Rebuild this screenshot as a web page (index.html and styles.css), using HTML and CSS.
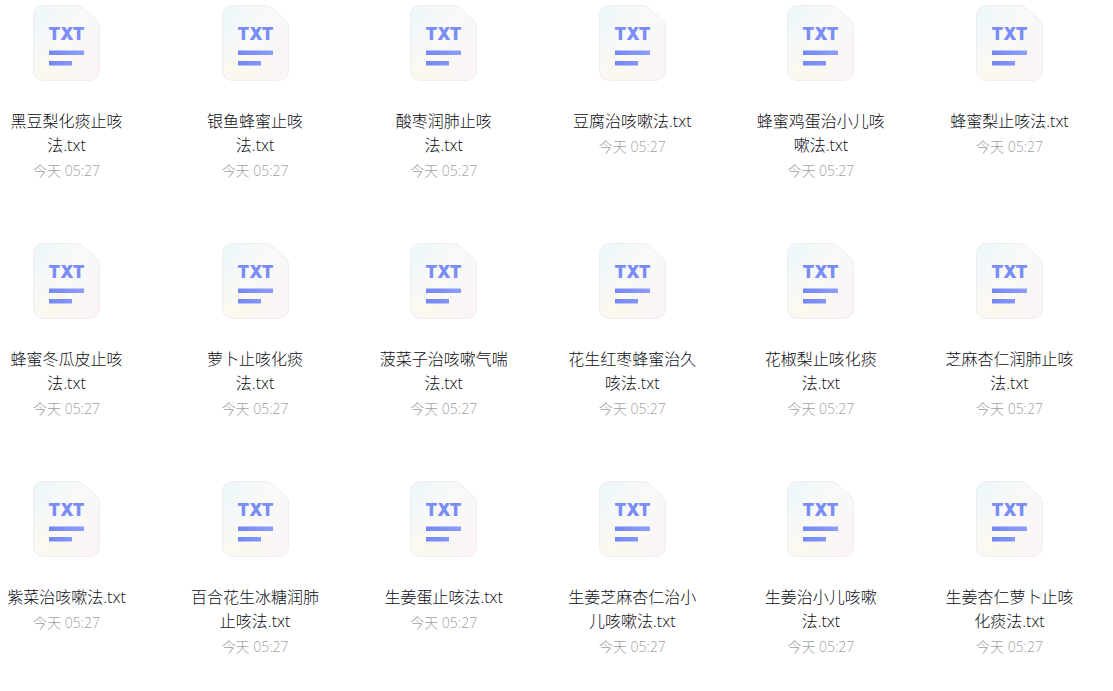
FILE: index.html
```html
<!DOCTYPE html>
<html lang="zh-CN">
<head>
<meta charset="utf-8">
<meta name="viewport" content="width=device-width, initial-scale=1">
<title>文件</title>
<link rel="stylesheet" href="styles.css">
</head>
<body>
<svg class="sprite" width="0" height="0" aria-hidden="true">
  <defs>
    <linearGradient id="paper" x1="0" y1="0.1" x2="1" y2="0.9">
      <stop offset="0" stop-color="#edf7fa"/>
      <stop offset="0.45" stop-color="#f9f9f7"/>
      <stop offset="1" stop-color="#fbf4f7"/>
    </linearGradient>
    <radialGradient id="glow" cx="0.25" cy="1" r="0.6">
      <stop offset="0" stop-color="#fbf8ee"/>
      <stop offset="1" stop-color="#fbf8ee" stop-opacity="0"/>
    </radialGradient>
    <linearGradient id="ink" x1="0" y1="0" x2="1" y2="0">
      <stop offset="0" stop-color="#7387f5"/>
      <stop offset="1" stop-color="#8d9df9"/>
    </linearGradient>
    <symbol id="txt-file" viewBox="0 0 67 76">
      <path d="M11.500 .5H43C46 .5 48 1.500 50 3.200L63 14.500C65.500 16.700 66.500 19 66.500 22V64.500C66.500 71.500 62.500 75.500 55.500 75.500H11.500C4.500 75.500 .5 71.500 .5 64.500V11.500C.5 4.500 4.500 .5 11.500 .5Z" fill="url(#paper)"/>
      <path d="M11.500 .5H43C46 .5 48 1.500 50 3.200L63 14.500C65.500 16.700 66.500 19 66.500 22V64.500C66.500 71.500 62.500 75.500 55.500 75.500H11.500C4.500 75.500 .5 71.500 .5 64.500V11.500C.5 4.500 4.500 .5 11.500 .5Z" fill="url(#glow)" stroke="#efecf0"/>
      <text class="file-type" x="33.500" y="35" text-anchor="middle">TXT</text>
      <path d="M16 45.500H51V50H16ZM16 56H39V60.500H16Z" fill="url(#ink)"/>
    </symbol>
  </defs>
</svg>
<main>
  <ul class="files">
    <li><a class="file" href="#"><svg class="icon" aria-hidden="true"><use href="#txt-file"/></svg><span class="name">黑豆梨化痰止咳法.txt</span><time class="date">今天 05:27</time></a></li>
    <li><a class="file" href="#"><svg class="icon" aria-hidden="true"><use href="#txt-file"/></svg><span class="name">银鱼蜂蜜止咳<wbr>法.txt</span><time class="date">今天 05:27</time></a></li>
    <li><a class="file" href="#"><svg class="icon" aria-hidden="true"><use href="#txt-file"/></svg><span class="name">酸枣润肺止咳<wbr>法.txt</span><time class="date">今天 05:27</time></a></li>
    <li><a class="file" href="#"><svg class="icon" aria-hidden="true"><use href="#txt-file"/></svg><span class="name">豆腐治咳嗽法.txt</span><time class="date">今天 05:27</time></a></li>
    <li><a class="file" href="#"><svg class="icon" aria-hidden="true"><use href="#txt-file"/></svg><span class="name">蜂蜜鸡蛋治小儿咳嗽法.txt</span><time class="date">今天 05:27</time></a></li>
    <li><a class="file" href="#"><svg class="icon" aria-hidden="true"><use href="#txt-file"/></svg><span class="name">蜂蜜梨止咳法.txt</span><time class="date">今天 05:27</time></a></li>
    <li><a class="file" href="#"><svg class="icon" aria-hidden="true"><use href="#txt-file"/></svg><span class="name">蜂蜜冬瓜皮止咳法.txt</span><time class="date">今天 05:27</time></a></li>
    <li><a class="file" href="#"><svg class="icon" aria-hidden="true"><use href="#txt-file"/></svg><span class="name">萝卜止咳化痰法.txt</span><time class="date">今天 05:27</time></a></li>
    <li><a class="file" href="#"><svg class="icon" aria-hidden="true"><use href="#txt-file"/></svg><span class="name">菠菜子治咳嗽气喘法.txt</span><time class="date">今天 05:27</time></a></li>
    <li><a class="file" href="#"><svg class="icon" aria-hidden="true"><use href="#txt-file"/></svg><span class="name">花生红枣蜂蜜治久咳法.txt</span><time class="date">今天 05:27</time></a></li>
    <li><a class="file" href="#"><svg class="icon" aria-hidden="true"><use href="#txt-file"/></svg><span class="name">花椒梨止咳化痰法.txt</span><time class="date">今天 05:27</time></a></li>
    <li><a class="file" href="#"><svg class="icon" aria-hidden="true"><use href="#txt-file"/></svg><span class="name">芝麻杏仁润肺止咳法.txt</span><time class="date">今天 05:27</time></a></li>
    <li><a class="file" href="#"><svg class="icon" aria-hidden="true"><use href="#txt-file"/></svg><span class="name">紫菜治咳嗽法.txt</span><time class="date">今天 05:27</time></a></li>
    <li><a class="file" href="#"><svg class="icon" aria-hidden="true"><use href="#txt-file"/></svg><span class="name">百合花生冰糖润肺止咳法.txt</span><time class="date">今天 05:27</time></a></li>
    <li><a class="file" href="#"><svg class="icon" aria-hidden="true"><use href="#txt-file"/></svg><span class="name">生姜蛋止咳法.txt</span><time class="date">今天 05:27</time></a></li>
    <li><a class="file" href="#"><svg class="icon" aria-hidden="true"><use href="#txt-file"/></svg><span class="name">生姜芝麻杏仁治小儿咳嗽法.txt</span><time class="date">今天 05:27</time></a></li>
    <li><a class="file" href="#"><svg class="icon" aria-hidden="true"><use href="#txt-file"/></svg><span class="name">生姜治小儿咳嗽法.txt</span><time class="date">今天 05:27</time></a></li>
    <li><a class="file" href="#"><svg class="icon" aria-hidden="true"><use href="#txt-file"/></svg><span class="name">生姜杏仁萝卜止咳化痰法.txt</span><time class="date">今天 05:27</time></a></li>
  </ul>
</main>
</body>
</html>
```
FILE: styles.css
```css
* {
  box-sizing: border-box;
}

body {
  margin: 0;
  background: #fff;
  color: #0c0d12;
  font-family: "Open Sans", "Noto Sans CJK SC", sans-serif;
  font-size: 16px;
  line-height: 24px;
}

.sprite {
  position: absolute;
}

.files {
  display: grid;
  grid-template-columns: repeat(6, 133px);
  grid-auto-rows: minmax(178px, auto);
  justify-content: space-between;
  row-gap: 60px;
  margin: 0;
  padding: 5px 37px 0 0;
  list-style: none;
}

.file {
  display: flex;
  flex-direction: column;
  align-items: center;
  color: inherit;
  text-align: center;
  text-decoration: none;
}

.icon {
  width: 67px;
  height: 76px;
  margin-bottom: 28px;
}

.file-type {
  fill: #7a8df6;
  font-family: Inter, sans-serif;
  font-size: 17px;
  font-weight: 900;
}

.name {
  font-weight: 300;
}

.date {
  margin-top: 4px;
  color: #a0a1a4;
  font-size: 14px;
  font-weight: 300;
  line-height: 20px;
}
```
